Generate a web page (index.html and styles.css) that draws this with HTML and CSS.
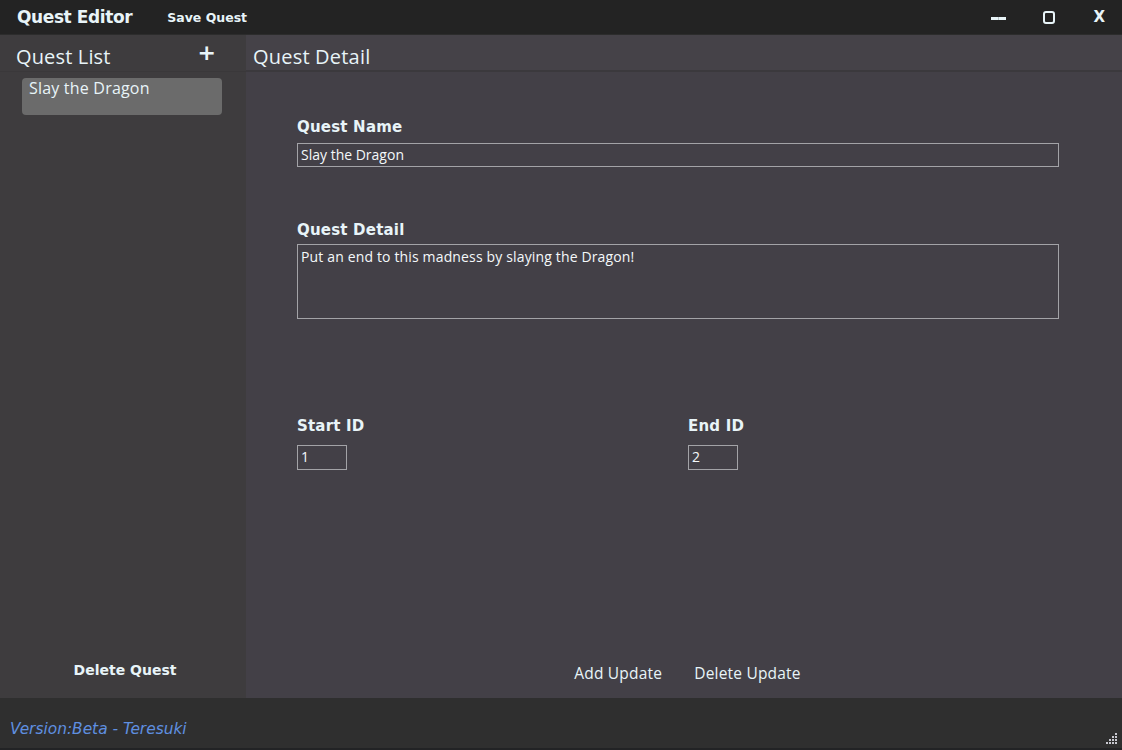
FILE: index.html
```html
<!DOCTYPE html>
<html>
<head>
<meta charset="utf-8">
<link rel="stylesheet" href="styles.css">
</head>
<body>
<div class="app">
  <header class="titlebar">
    <span class="app-title">Quest Editor</span>
    <span class="menu-item">Save Quest</span>
    <div class="win-controls">
      <span class="ctl ctl-min"><svg width="16" height="6" viewBox="0 0 16 6"><rect x="0" y="2" width="7" height="3" fill="#e8f4f8"/><rect x="7" y="2" width="1" height="3" fill="#b8c4c8"/><rect x="8" y="2" width="7" height="3" fill="#e8f4f8"/></svg></span>
      <span class="ctl ctl-max"><svg width="12" height="13" viewBox="0 0 12 13"><rect x="1" y="1" width="10" height="11" rx="2" fill="none" stroke="#e8f4f8" stroke-width="2"/></svg></span>
      <span class="ctl ctl-close">X</span>
    </div>
  </header>
  <div class="main">
    <aside class="sidebar">
      <div class="side-head">
        <span class="side-title">Quest List</span>
        <span class="add-btn">+</span>
      </div>
      <ul class="quest-list">
        <li class="quest-item">Slay the Dragon</li>
      </ul>
      <div class="side-foot">Delete Quest</div>
    </aside>
    <section class="detail">
      <div class="detail-head">Quest Detail</div>
      <div class="detail-body">
        <div class="field">
          <label class="label">Quest Name</label>
          <div class="input">Slay the Dragon</div>
        </div>
        <div class="field field-detail">
          <label class="label detail-label">Quest Detail</label>
          <div class="input textarea">Put an end to this madness by slaying the Dragon!</div>
        </div>
        <div class="ids">
          <div class="id-field id-start">
            <label class="label id-label">Start ID</label>
            <div class="input small">1</div>
          </div>
          <div class="id-field">
            <label class="label id-label">End ID</label>
            <div class="input small">2</div>
          </div>
        </div>
        <div class="actions">
          <span class="action">Add Update</span>
          <span class="action">Delete Update</span>
        </div>
      </div>
    </section>
  </div>
  <footer class="statusbar">
    <span class="version">Version:Beta - Teresuki</span>
    <span class="grip">
      <svg width="12" height="12" viewBox="0 0 12 12" fill="#c8c8d0">
        <rect x="9" y="0" width="2" height="2"/>
        <rect x="6" y="3" width="2" height="2"/><rect x="9" y="3" width="2" height="2"/>
        <rect x="3" y="6" width="2" height="2"/><rect x="6" y="6" width="2" height="2"/><rect x="9" y="6" width="2" height="2"/>
        <rect x="0" y="9" width="2" height="2"/><rect x="3" y="9" width="2" height="2"/><rect x="6" y="9" width="2" height="2"/><rect x="9" y="9" width="2" height="2"/>
      </svg>
    </span>
  </footer>
</div>
</body>
</html>
```
FILE: styles.css
```css
* { box-sizing: border-box; }
html, body { margin: 0; padding: 0; }
body {
  width: 1122px;
  height: 750px;
  overflow: hidden;
  background: #1e1e1e;
  font-family: "Open Sans", "DejaVu Sans", sans-serif;
  color: #e8f4f8;
}
.app {
  width: 1122px;
  height: 750px;
  display: flex;
  flex-direction: column;
}
.titlebar {
  height: 35px;
  flex: none;
  background: #232323;
  border-bottom: 1px solid #2c2c2c;
  display: flex;
  align-items: center;
  padding-left: 17px;
}
.app-title {
  font-family: "DejaVu Sans", sans-serif;
  font-weight: bold;
  font-size: 17px;
  letter-spacing: -0.4px;
  margin-top: -1px;
}
.menu-item {
  font-family: "DejaVu Sans", sans-serif;
  font-weight: bold;
  font-size: 12.5px;
  margin-left: 35px;
  margin-top: 1px;
}
.win-controls {
  margin-left: auto;
  display: flex;
  align-items: center;
  height: 100%;
}
.ctl { display: flex; align-items: center; justify-content: center; }
.ctl-min { margin-right: 36px; margin-top: 1px; }
.ctl-max { margin-right: 38px; }
.ctl-close {
  font-family: "DejaVu Sans", sans-serif;
  font-weight: bold;
  font-size: 15px;
  margin-right: 17px;
  margin-top: -1px;
}
.main {
  flex: 1;
  display: flex;
  min-height: 0;
}
.sidebar {
  width: 246px;
  flex: none;
  background: #3e3c3e;
  display: flex;
  flex-direction: column;
}
.side-head {
  height: 37px;
  display: flex;
  align-items: center;
  padding-left: 16px;
  border-bottom: 1px solid #3a383a;
}
.side-title {
  font-size: 20px;
  margin-top: 7px;
  letter-spacing: 0.15px;
}
.add-btn {
  font-family: "DejaVu Sans", sans-serif;
  font-weight: bold;
  font-size: 22px;
  margin-left: 87px;
  margin-top: -1px;
}
.quest-list {
  list-style: none;
  margin: 0;
  padding: 6px 24px 0 22px;
  flex: 1;
}
.quest-item {
  height: 37px;
  background: #6b6b6b;
  border-radius: 4px;
  padding: 0 7px;
  font-size: 16px;
  letter-spacing: 0.2px;
  line-height: 20px;
}
.side-foot {
  height: 56px;
  display: flex;
  justify-content: center;
  align-items: center;
  font-family: "DejaVu Sans", sans-serif;
  font-weight: bold;
  font-size: 14px;
  padding-bottom: 1px;
  padding-left: 4px;
}
.detail {
  flex: 1;
  background: #434047;
  display: flex;
  flex-direction: column;
  min-width: 0;
}
.detail-head {
  height: 37px;
  background: #454248;
  border-bottom: 2px solid #3b393d;
  font-size: 20px;
  letter-spacing: 0.2px;
  padding-left: 7px;
  display: flex;
  align-items: center;
  padding-top: 8px;
}
.detail-body {
  flex: 1;
  display: flex;
  flex-direction: column;
  padding: 45px 63px 0 51px;
}
.label {
  display: block;
  font-family: "DejaVu Sans", sans-serif;
  font-weight: bold;
  font-size: 15px;
  letter-spacing: 0.2px;
  line-height: 20px;
  margin-bottom: 6px;
}
.input {
  border: 1px solid #a3a3a7;
  background: #434047;
  font-size: 14px;
  line-height: 20px;
  height: 24px;
  padding: 1px 3px;
  color: #f4f8fa;
}
.field-detail { margin-top: 53px; }
.detail-label { margin-bottom: 4px; }
.textarea { height: 75px; padding-top: 2px; letter-spacing: 0.15px; }
.ids {
  display: flex;
  margin-top: 97px;
}
.id-start { width: 391px; }
.id-label { margin-bottom: 9px; }
.small { width: 50px; height: 25px; }
.actions {
  margin-top: auto;
  height: 54px;
  display: flex;
  justify-content: center;
  align-items: center;
  gap: 32px;
  font-size: 15.5px;
  letter-spacing: 0.2px;
  padding-left: 19px;
  padding-top: 3px;
}
.statusbar {
  height: 52px;
  flex: none;
  background: #2f2f2f;
  border-bottom: 2px solid #222325;
  display: flex;
  align-items: flex-end;
  padding: 0 4px 9px 10px;
}
.version {
  font-family: "DejaVu Sans", sans-serif;
  font-style: italic;
  font-size: 15.4px;
  color: #5f8fe0;
  line-height: 20px;
}
.grip {
  margin-left: auto;
  display: flex;
  margin-bottom: -6px;
}
```
